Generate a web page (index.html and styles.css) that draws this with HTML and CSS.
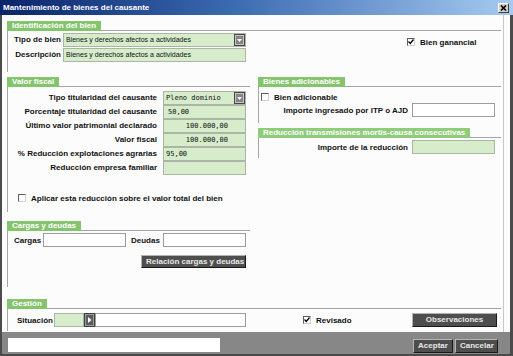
FILE: index.html
```html
<!DOCTYPE html>
<html lang="es">

<head>
    <meta charset="UTF-8">
    <title>Mantenimiento de bienes del causante</title>
    <link rel="stylesheet" href="styles.css">
</head>

<body>
    <div class="window">
        <div class="titlebar">
            <span>Mantenimiento de bienes del causante</span>
            <span class="close">
                <svg width="7" height="6" viewBox="0 0 7 6"><path d="M1 0.5l5 5M6 0.5l-5 5" stroke="#000" stroke-width="1.6" fill="none"/></svg>
            </span>
        </div>

        <div class="frame">
            <div class="panel">
                <!-- Identificacion -->
                <div class="group">
                    <div class="group-head"><span class="tab">Identificación del bien</span></div>
                    <div class="group-body ident-body">
                        <div class="rows ident-rows">
                            <label>Tipo de bien</label>
                            <div class="field green combo">
                                <span>Bienes y derechos afectos a actividades</span>
                                <svg class="drop" width="11" height="12" viewBox="0 0 11 12"><rect width="11" height="12" fill="#474747"/><rect x="1.5" y="1.5" width="8" height="9" fill="#858585" stroke="#c4c4c4"/><path d="M3 5h5l-2.5 3z" fill="#fff"/></svg>
                            </div>
                            <label>Descripción</label>
                            <div class="field green">Bienes y derechos afectos a actividades</div>
                        </div>
                        <div class="check ganancial">
                            <span class="box"><svg width="6" height="6" viewBox="0 0 6 6"><path d="M0.5 2.5l1.8 2 3.2-4" stroke="#000" stroke-width="1.3" fill="none"/></svg></span>
                            Bien ganancial
                        </div>
                    </div>
                </div>

                <div class="middle">
                    <div class="col">
                        <!-- Valor fiscal -->
                        <div class="group">
                            <div class="group-head"><span class="tab">Valor fiscal</span></div>
                            <div class="group-body fiscal-body">
                                <div class="rows fiscal-rows">
                                    <label>Tipo titularidad del causante</label>
                                    <div class="field green combo mono">
                                        <span>Pleno dominio</span>
                                        <svg class="drop" width="11" height="12" viewBox="0 0 11 12"><rect width="11" height="12" fill="#474747"/><rect x="1.5" y="1.5" width="8" height="9" fill="#858585" stroke="#c4c4c4"/><path d="M3 5h5l-2.5 3z" fill="#fff"/></svg>
                                    </div>
                                    <label>Porcentaje titularidad del causante</label>
                                    <div class="field green mono pad">50,00</div>
                                    <label>Último valor patrimonial declarado</label>
                                    <div class="field green mono num">100.000,00</div>
                                    <label>Valor fiscal</label>
                                    <div class="field green mono num">100.000,00</div>
                                    <label>% Reducción explotaciones agrarias</label>
                                    <div class="field green mono">95,00</div>
                                    <label>Reducción empresa familiar</label>
                                    <div class="field green"></div>
                                </div>
                                <div class="check aplicar">
                                    <span class="box"></span>
                                    Aplicar esta reducción sobre el valor total del bien
                                </div>
                            </div>
                        </div>

                        <!-- Cargas y deudas -->
                        <div class="group cargas">
                            <div class="group-head"><span class="tab">Cargas y deudas</span></div>
                            <div class="group-body cargas-body">
                                <div class="cargas-row">
                                    <label>Cargas</label>
                                    <div class="field white"></div>
                                    <label class="deudas">Deudas</label>
                                    <div class="field white"></div>
                                </div>
                                <div class="btn-row">
                                    <button class="btn relacion">Relación cargas y deudas</button>
                                </div>
                            </div>
                        </div>
                    </div>

                    <div class="col">
                        <!-- Bienes adicionables -->
                        <div class="group">
                            <div class="group-head"><span class="tab">Bienes adicionables</span></div>
                            <div class="group-body adic-body">
                                <div class="check adicionable">
                                    <span class="box"></span>
                                    Bien adicionable
                                </div>
                                <div class="line-row itp">
                                    <label>Importe ingresado por ITP o AJD</label>
                                    <div class="field white short"></div>
                                </div>
                            </div>
                        </div>

                        <!-- Reduccion -->
                        <div class="group reduccion">
                            <div class="group-head"><span class="tab light">Reducción transmisiones mortis-causa consecutivas</span></div>
                            <div class="group-body reduccion-body">
                                <div class="line-row">
                                    <label>Importe de la reducción</label>
                                    <div class="field green short"></div>
                                </div>
                            </div>
                        </div>
                    </div>
                </div>

                <!-- Gestion -->
                <div class="group gestion">
                    <div class="group-head"><span class="tab">Gestión</span></div>
                    <div class="group-body gestion-body">
                        <label class="situacion">Situación</label>
                        <div class="field green sit-code"></div>
                        <span class="sit-btn">
                            <svg width="11" height="14" viewBox="0 0 11 14"><rect width="11" height="14" fill="#3f3f3f"/><rect x="1.5" y="1.5" width="8" height="11" fill="#5c5c5c" stroke="#9a9a9a"/><path d="M4 4l3.5 3-3.5 3z" fill="#fff"/></svg>
                        </span>
                        <div class="field white sit-desc"></div>
                        <div class="check revisado">
                            <span class="box"><svg width="6" height="6" viewBox="0 0 6 6"><path d="M0.5 2.5l1.8 2 3.2-4" stroke="#000" stroke-width="1.3" fill="none"/></svg></span>
                            Revisado
                        </div>
                        <button class="btn observ">Observaciones</button>
                    </div>
                </div>
            </div>

            <div class="statusbar">
                <div class="status-input"></div>
                <button class="btn aceptar">Aceptar</button>
                <button class="btn cancelar">Cancelar</button>
            </div>
        </div>
    </div>
</body>

</html>
```

FILE: styles.css
```css
* {
    box-sizing: border-box;
}

body {
    margin: 0;
    font-family: "Liberation Sans", Arial, sans-serif;
    font-size: 8px;
    color: #111;
    background: #fff;
}

.window {
    width: 513px;
    height: 356px;
    display: flex;
    flex-direction: column;
    overflow: hidden;
}

.titlebar {
    flex: none;
    height: 15px;
    display: flex;
    align-items: center;
    justify-content: space-between;
    padding: 0 4px 0 3px;
    background: linear-gradient(to right, #0a246a, #3a6ab0 45%, #a6caf0);
    color: #fff;
    font-weight: bold;
}

.close {
    width: 11px;
    height: 10px;
    display: flex;
    align-items: center;
    justify-content: center;
    background: #d4d0c8;
    border: 1px solid;
    border-color: #fff #404040 #404040 #fff;
}

.frame {
    flex: 1;
    display: flex;
    flex-direction: column;
    border: 0 solid #4b4b4b;
    border-width: 0 3px 2px 2px;
    background: #fcfcfc;
}

.panel {
    flex: 1;
    margin-right: 6px;
    padding: 6px 2px 0 5px;
    border-right: 1px solid #c8c8c8;
}

/* group boxes */
.group-head {
    display: flex;
    align-items: flex-end;
    height: 10px;
}

.group-head::after {
    content: "";
    flex: 1;
    border-bottom: 1px solid #a4a4a4;
}

.tab {
    height: 10px;
    line-height: 10px;
    padding: 0 5px;
    background: #84c46c;
    color: #fff;
    font-weight: bold;
    white-space: nowrap;
}

.tab.light {
    background: #8fcc7a;
}

.group-body {
    border-left: 1px solid #a4a4a4;
}

label {
    font-weight: bold;
    white-space: nowrap;
}

.rows {
    display: grid;
    grid-auto-rows: 14px;
}

.rows label {
    text-align: right;
    line-height: 14px;
}

.field {
    height: 14px;
    border: 1px solid #aab5a5;
    padding: 0 2px;
    line-height: 12px;
    font-size: 7px;
    white-space: nowrap;
    overflow: hidden;
}

.green {
    background: #d6eccb;
}

.white {
    background: #fff;
    border-color: #9c9c9c;
}

.combo {
    display: flex;
    justify-content: space-between;
    align-items: center;
    padding-right: 0;
}

.drop {
    flex: none;
}

.mono {
    font-family: "DejaVu Sans Mono", "Liberation Mono", monospace;
    font-size: 7px;
}

.pad {
    padding-left: 4px;
}

.num {
    text-align: right;
    padding-right: 17px;
}

/* checkboxes */
.check {
    display: flex;
    align-items: center;
    gap: 5px;
    height: 10px;
    font-weight: bold;
    white-space: nowrap;
}

.box {
    width: 8px;
    height: 8px;
    flex: none;
    display: flex;
    align-items: center;
    justify-content: center;
    border: 1px solid;
    border-color: #5e5e5e #d0d0d0 #d0d0d0 #5e5e5e;
    background: #fff;
}

/* identificacion */
.ident-body {
    display: flex;
    height: 41px;
    padding-top: 2px;
}

.ident-rows {
    grid-template-columns: 53px 183px;
    column-gap: 2px;
    row-gap: 1px;
}

.ganancial {
    margin: 4px 0 0 161px;
}

/* two columns */
.middle {
    display: grid;
    grid-template-columns: 243px 243px;
    column-gap: 8px;
    align-items: start;
    margin-top: 5px;
}

.fiscal-body {
    height: 125px;
    padding-top: 4px;
}

.fiscal-rows {
    grid-template-columns: 149px 83px;
    column-gap: 6px;
}

.aplicar {
    margin: 18px 0 0 10px;
}

.cargas {
    margin-top: 9px;
}

.cargas-body {
    height: 56px;
    padding: 2px 0 0 6px;
}

.cargas-row {
    display: grid;
    grid-template-columns: 29px 83px 37px 83px;
    align-items: center;
}

.cargas-row .deudas {
    padding-left: 5px;
}

.btn-row {
    display: flex;
    justify-content: flex-end;
    margin-top: 8px;
    padding-right: 4px;
}

.btn {
    height: 14px;
    padding: 0 4px;
    font-family: inherit;
    font-size: 8px;
    font-weight: bold;
    line-height: 12px;
    color: #e8e8e8;
    background: #4e4e4e;
    border: 1px solid;
    border-color: #b4b4b4 #1a1a1a #1a1a1a #b4b4b4;
    white-space: nowrap;
}

.relacion {
    width: 105px;
    height: 13px;
}

.adic-body {
    height: 36px;
    padding-top: 5px;
}

.adicionable {
    margin-left: 2px;
}

.line-row {
    display: flex;
    justify-content: flex-end;
    align-items: center;
    gap: 4px;
    padding-right: 6px;
}

.itp {
    margin-top: 1px;
}

.short {
    width: 83px;
}

.reduccion {
    margin-top: 5px;
}

.reduccion-body {
    height: 20px;
    padding-top: 2px;
}

/* gestion */
.gestion {
    margin-top: 12px;
}

.gestion-body {
    display: flex;
    align-items: center;
    height: 22px;
    padding: 4px 4px 4px 9px;
}

.situacion {
    width: 37px;
}

.sit-code {
    width: 30px;
}

.sit-btn {
    display: flex;
}

.sit-desc {
    width: 151px;
}

.revisado {
    margin-left: 57px;
}

.observ {
    width: 85px;
    margin-left: auto;
}

/* bottom bar */
.statusbar {
    flex: none;
    height: 22px;
    display: flex;
    align-items: flex-start;
    gap: 2px;
    padding: 6px 12px 0 6px;
    background: #878787;
}

.status-input {
    width: 212px;
    height: 14px;
    background: #fff;
}

.aceptar {
    width: 40px;
    margin: 1px 0 0 auto;
}

.cancelar {
    width: 43px;
    margin-top: 1px;
}
```
